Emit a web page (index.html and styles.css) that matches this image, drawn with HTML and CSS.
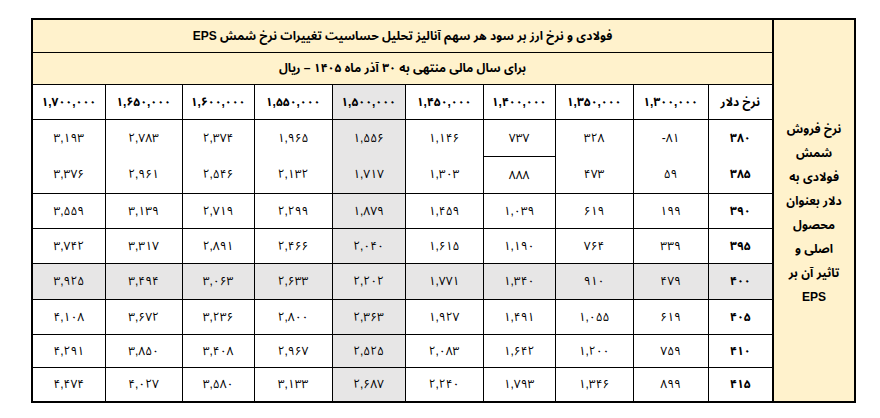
FILE: index.html
```html
<!DOCTYPE html>
<html lang="fa">
<head>
<meta charset="utf-8">
<title>تحلیل حساسیت EPS</title>
<link rel="stylesheet" href="styles.css">
</head>
<body>
<table class="sens" dir="rtl">
  <colgroup>
    <col class="c-side">
    <col class="c-rate">
    <col class="c-a"><col class="c-b"><col class="c-c"><col class="c-b">
    <col class="c-e"><col class="c-b"><col class="c-c"><col class="c-f"><col class="c-e">
  </colgroup>
  <tbody>
    <tr class="r-title">
      <td class="side" rowspan="11">نرخ فروش<br>شمش<br>فولادی به<br>دلار بعنوان<br>محصول<br>اصلی و<br>تاثیر آن بر<br>EPS</td>
      <td class="title" colspan="10">فولادی و نرخ ارز بر سود هر سهم آنالیز تحلیل حساسیت تغییرات نرخ شمش EPS</td>
    </tr>
    <tr class="r-sub">
      <td class="title" colspan="10">برای سال مالی منتهی به ۳۰ آذر ماه ۱۴۰۵ – ریال</td>
    </tr>
    <tr class="r-head">
      <th>نرخ دلار</th>
      <th>۱,۳۰۰,۰۰۰</th><th>۱,۳۵۰,۰۰۰</th><th>۱,۴۰۰,۰۰۰</th><th>۱,۴۵۰,۰۰۰</th>
      <th class="hl">۱,۵۰۰,۰۰۰</th><th>۱,۵۵۰,۰۰۰</th><th>۱,۶۰۰,۰۰۰</th><th>۱,۶۵۰,۰۰۰</th><th>۱,۷۰۰,۰۰۰</th>
    </tr>
    <tr class="r-380">
      <td class="rate">۳۸۰</td>
      <td>۸۱-</td><td>۳۲۸</td><td class="keep">۷۳۷</td><td>۱,۱۴۶</td>
      <td class="hl">۱,۵۵۶</td><td>۱,۹۶۵</td><td>۲,۳۷۴</td><td>۲,۷۸۳</td><td>۳,۱۹۳</td>
    </tr>
    <tr class="r-385">
      <td class="rate">۳۸۵</td>
      <td>۵۹</td><td>۴۷۳</td><td>۸۸۸</td><td>۱,۳۰۳</td>
      <td class="hl">۱,۷۱۷</td><td>۲,۱۳۲</td><td>۲,۵۴۶</td><td>۲,۹۶۱</td><td>۳,۳۷۶</td>
    </tr>
    <tr class="r-390">
      <td class="rate">۳۹۰</td>
      <td>۱۹۹</td><td>۶۱۹</td><td>۱,۰۳۹</td><td>۱,۴۵۹</td>
      <td class="hl">۱,۸۷۹</td><td>۲,۲۹۹</td><td>۲,۷۱۹</td><td>۳,۱۳۹</td><td>۳,۵۵۹</td>
    </tr>
    <tr class="r-395">
      <td class="rate">۳۹۵</td>
      <td>۳۳۹</td><td>۷۶۴</td><td>۱,۱۹۰</td><td>۱,۶۱۵</td>
      <td class="hl">۲,۰۴۰</td><td>۲,۴۶۶</td><td>۲,۸۹۱</td><td>۳,۳۱۷</td><td>۳,۷۴۲</td>
    </tr>
    <tr class="r-400 base">
      <td class="rate">۴۰۰</td>
      <td>۴۷۹</td><td>۹۱۰</td><td>۱,۳۴۰</td><td>۱,۷۷۱</td>
      <td class="hl">۲,۲۰۲</td><td>۲,۶۳۳</td><td>۳,۰۶۳</td><td>۳,۴۹۴</td><td>۳,۹۲۵</td>
    </tr>
    <tr class="r-405">
      <td class="rate">۴۰۵</td>
      <td>۶۱۹</td><td>۱,۰۵۵</td><td>۱,۴۹۱</td><td>۱,۹۲۷</td>
      <td class="hl">۲,۳۶۳</td><td>۲,۸۰۰</td><td>۳,۲۳۶</td><td>۳,۶۷۲</td><td>۴,۱۰۸</td>
    </tr>
    <tr class="r-410">
      <td class="rate">۴۱۰</td>
      <td>۷۵۹</td><td>۱,۲۰۰</td><td>۱,۶۴۲</td><td>۲,۰۸۳</td>
      <td class="hl">۲,۵۲۵</td><td>۲,۹۶۷</td><td>۳,۴۰۸</td><td>۳,۸۵۰</td><td>۴,۲۹۱</td>
    </tr>
    <tr class="r-415">
      <td class="rate">۴۱۵</td>
      <td>۸۹۹</td><td>۱,۳۴۶</td><td>۱,۷۹۳</td><td>۲,۲۴۰</td>
      <td class="hl">۲,۶۸۷</td><td>۳,۱۳۳</td><td>۳,۵۸۰</td><td>۴,۰۲۷</td><td>۴,۴۷۴</td>
    </tr>
  </tbody>
</table>
</body>
</html>
```
FILE: styles.css
```css
html, body {
  margin: 0;
  padding: 0;
  background: #ffffff;
}

body {
  padding: 18px 0 0 31px;
  font-family: "Liberation Sans", "Noto Sans Arabic", "DejaVu Sans", sans-serif;
  color: #000000;
}

.sens {
  border-collapse: collapse;
  table-layout: fixed;
  width: 825px;
  border: 2px solid #000000;
  font-size: 12px;
}

.c-side { width: 82px; }
.c-rate { width: 65px; }
.c-a { width: 75px; }
.c-b { width: 78px; }
.c-c { width: 72px; }
.c-e { width: 73px; }
.c-f { width: 77px; }

.sens td,
.sens th {
  border: 1px solid #000000;
  padding: 0;
  text-align: center;
  vertical-align: middle;
  font-weight: normal;
  white-space: nowrap;
  line-height: 16px;
}

.sens th,
.sens .rate {
  font-weight: bold;
}

.sens .title {
  background: #fff2cc;
  font-weight: bold;
  font-size: 12px;
}

.sens .side {
  background: #fff2cc;
  font-weight: bold;
  border-left: 2px solid #000000;
  line-height: 24px;
  padding-top: 5px;
}

.sens .hl,
.sens .base td:not(.side) {
  background: #e7e6e6;
}

.r-title { height: 33px; }
.r-sub { height: 32px; }
.r-head { height: 35px; }
.r-380 { height: 37px; }
.r-385 { height: 37px; }
.r-390 { height: 35px; }
.r-395 { height: 35px; }
.r-400 { height: 36px; }
.r-405 { height: 35px; }
.r-410 { height: 33px; }
.r-415 { height: 35px; }

.sens .r-380 td { border-bottom-style: none; }
.sens .r-385 td { border-top-style: none; }
.sens .r-380 td.keep { border-bottom: 1px solid #000000; }
```
